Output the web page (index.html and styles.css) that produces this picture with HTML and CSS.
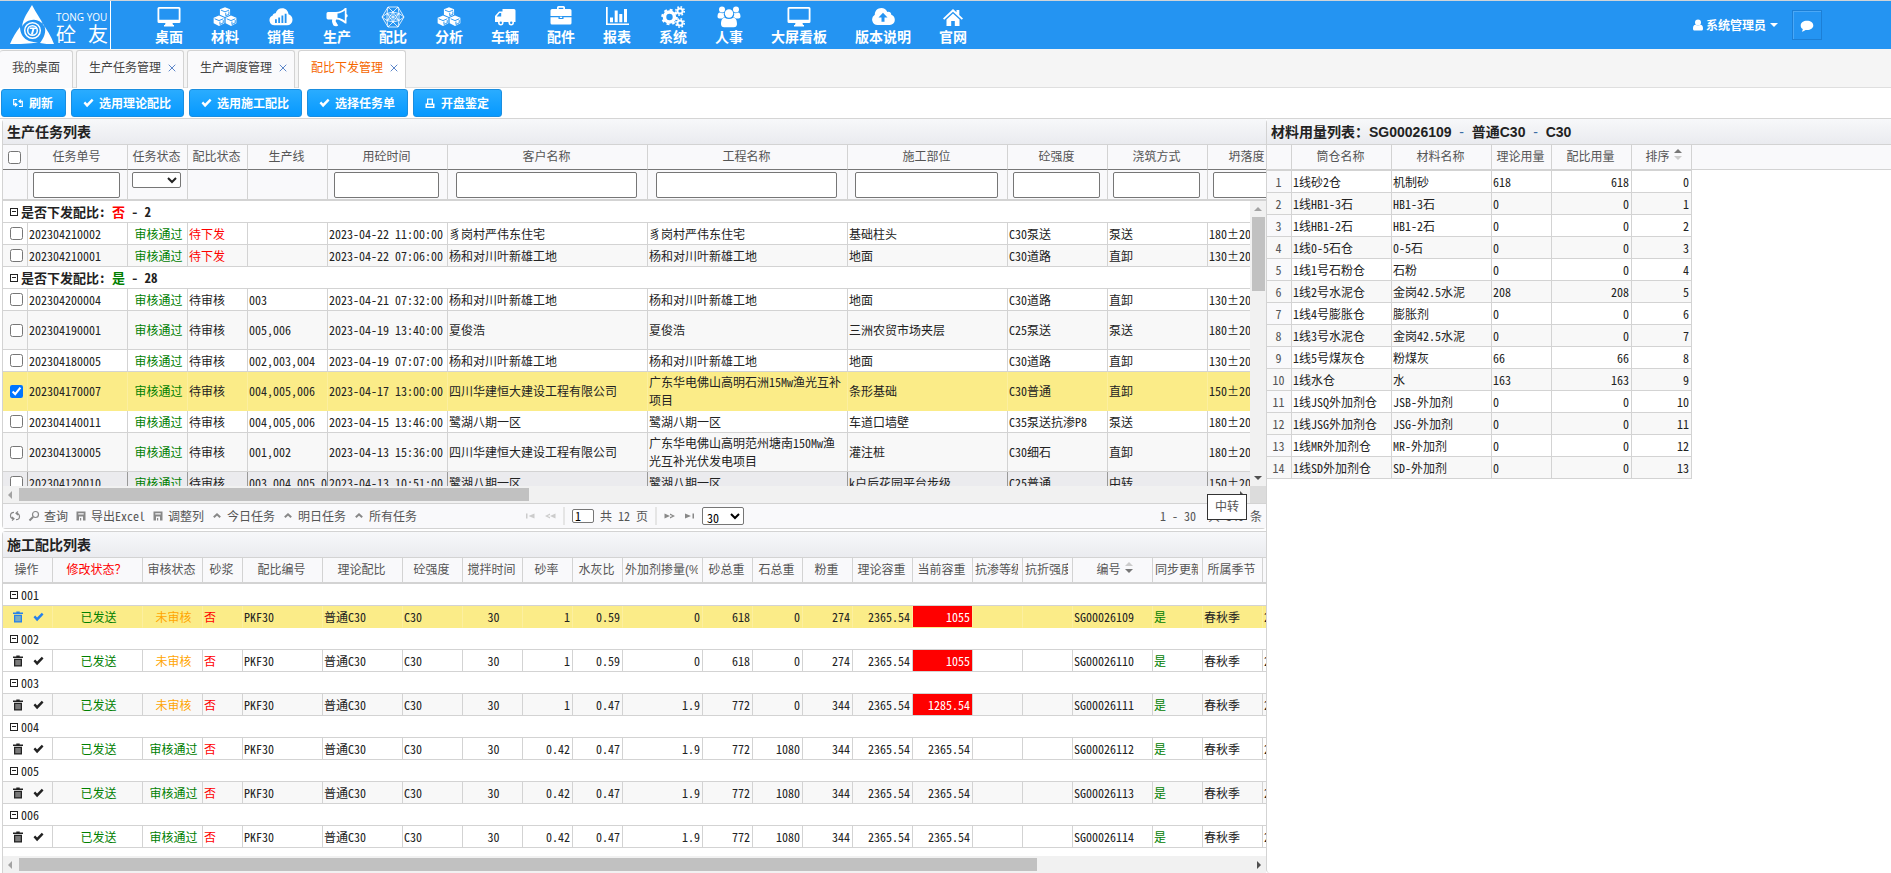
FILE: index.html
```html
<!DOCTYPE html>
<html lang="zh-CN">
<head>
<meta charset="utf-8">
<title>配比下发管理</title>
<link rel="stylesheet" href="styles.css">
</head>
<body>
<svg class="defs" aria-hidden="true">
  <symbol id="i-desktop" viewBox="0 0 24 22"><path fill-rule="evenodd" d="M2 1h20a1.500 1.500 0 0 1 1.500 1.500v13a1.500 1.500 0 0 1-1.500 1.500h-6.500l.5 2h1v1.500h-10v-1.500h1l.5-2H2A1.500 1.500 0 0 1 .5 15.500v-13A1.500 1.500 0 0 1 2 1zm.3 1.800v11h19.400v-11z"/></symbol>
  <symbol id="i-cubes" viewBox="0 0 26 22"><path d="M13 .5l5.500 2.200v5.800L13 11 7.500 8.500V2.700zM6.500 9.500l5.800 2.400v6L6.500 20.700.7 17.900v-6zM19.500 9.500l5.800 2.400v6l-5.800 2.800-5.800-2.800v-6z"/><path class="cut" d="M8.500 3.500L13 5.400l4.500-1.900M13.800 6.500v3.100l3.400-1.500v-3M1.800 12.900l4.700 2 4.700-2M14.800 12.900l4.700 2 4.700-2M7.500 16v3.100l3.600-1.700v-3M20.500 16v3.100l3.600-1.700v-3"/></symbol>
  <symbol id="i-cloudbars" viewBox="0 0 26 22"><path d="M6 20a5.500 5.500 0 0 1-2-10.600C4 8 5.500 6.600 7.200 6.900 8 3.500 11 1.500 14.200 1.500c4 0 6.800 2.900 6.900 6.500 2.500.8 4.400 3 4.400 6a6 6 0 0 1-6 6z"/><path class="cut thick" d="M7.500 17.500v-4M11 17.500v-6M14.500 17.500v-8M18 17.500v-10"/></symbol>
  <symbol id="i-horn" viewBox="0 0 24 22"><path fill-rule="evenodd" d="M3 6h8c3.500 0 6.500-1.500 9-4h1.500v6a1.800 1.800 0 0 1 0 3.400v6H20c-2.500-2.400-5.500-3.900-8.700-4-1 1.200-.6 2.200.3 3.400.6.900.6 1.600 1.600 2.400-.8 1.200-3.500 1.200-4.700.3C7.800 17.500 6.500 16 7.200 13.400H3A1.500 1.500 0 0 1 1.500 12V7.500A1.500 1.500 0 0 1 3 6zm9.500 1.600v4.200c2.600.3 5 1.300 7.300 2.900V4.500c-2.300 1.800-4.700 2.800-7.300 3.100z"/></symbol>
  <symbol id="i-poly" viewBox="0 0 24 22"><path class="line" d="M7 1h10l6 10-6 10H7L1 11zM7 1l5 5 5-5M1 11l5-3.500L7 1M23 11l-5-3.500L17 1M1 11l5 3.500L7 21M23 11l-5 3.500-1 6.500M7 21l5-5 5 5M6 7.500L12 6l6 1.500v7L12 16l-6-1.500zM6 7.500l12 7M18 7.500l-12 7M12 6v10M6 7.500L12 16l6-8.500M6 14.500L12 6l6 8.500"/></symbol>
  <symbol id="i-truck" viewBox="0 0 24 22"><path fill-rule="evenodd" d="M9.500 3H21a1.500 1.500 0 0 1 1.500 1.500V16H21a3 3 0 0 1-5.600 0h-4.800A3 3 0 0 1 5 16H2v-6l4-4.500h3.500zM3.700 10.500h4.500V7H6.600z"/><circle cx="7.800" cy="16.800" r="2.700"/><circle cx="18.200" cy="16.800" r="2.700"/><circle class="blue" cx="7.800" cy="16.800" r="1.200"/><circle class="blue" cx="18.200" cy="16.800" r="1.200"/></symbol>
  <symbol id="i-case" viewBox="0 0 24 22"><path fill-rule="evenodd" d="M8 3V1.500A1.500 1.500 0 0 1 9.500 0h5A1.500 1.500 0 0 1 16 1.500V3h5a1.500 1.500 0 0 1 1.500 1.500V10h-21V4.500A1.500 1.500 0 0 1 3 3zm1.700-1.300V3h4.600V1.700zM1.500 11.200h8V13h5v-1.800h8V17a1.500 1.500 0 0 1-1.500 1.500H3A1.500 1.500 0 0 1 1.500 17zM10.800 10.800h2.400v1.200h-2.400z"/></symbol>
  <symbol id="i-bars" viewBox="0 0 24 22"><path d="M1 1h1.700v16.500H24V19H1zM5 11.500h3v4.700H5zM9.700 4.500h3v11.700h-3zM14.300 8h3v8.200h-3zM19 3h3v13.200h-3z"/></symbol>
  <symbol id="i-cogs" viewBox="0 0 24 22"><circle class="gear" cx="8.500" cy="11" r="5"/><circle class="teeth" cx="8.500" cy="11" r="7.300"/><circle class="gear2" cx="19" cy="5" r="2.600"/><circle class="teeth2" cx="19" cy="5" r="4.200"/><circle class="gear2" cx="19" cy="17" r="2.600"/><circle class="teeth2" cx="19" cy="17" r="4.200"/></symbol>
  <symbol id="i-users" viewBox="0 0 24 22"><circle cx="5" cy="3.500" r="3"/><circle cx="19" cy="3.500" r="3"/><path d="M.5 10.500c0-2.500 1-4 2.500-4 1.500.8 3 .8 4 .2-.6 1.800 0 3.500 1 4.600-1 0-2 .4-2.800 1.200H2.500c-1.300 0-2-.7-2-2zM23.500 10.500c0-2.500-1-4-2.500-4-1.500.8-3 .8-4 .2.600 1.800 0 3.500-1 4.600 1 0 2 .4 2.800 1.200h2.700c1.300 0 2-.7 2-2z"/><circle cx="12" cy="7.500" r="4.200"/><path d="M4 18c0-4 1.300-6.300 3.800-6.300 2.500 1.600 5.900 1.600 8.400 0 2.500 0 3.800 2.300 3.800 6.300 0 2-1.200 3.300-3.200 3.300H7.200C5.200 21.300 4 20 4 18z"/></symbol>
  <symbol id="i-cloudup" viewBox="0 0 24 22"><path fill-rule="evenodd" d="M6.500 19A5.500 5.500 0 0 1 3.800 8.800C3.600 5 6.600 2 10.300 2c2.700 0 5 1.500 6 4 1.900-.8 4 .5 4 2.700 2 .6 3.500 2.500 3.500 5A5 5 0 0 1 18.500 19zM12 6.800l-4.500 4.600h3v4.400h3v-4.400h3z"/></symbol>
  <symbol id="i-home" viewBox="0 0 24 22"><path d="M12 3l3.500 3.300V4h2.800v5L22 12.500l-1.200 1.300L12 5.700l-8.800 8.100L2 12.500z"/><path d="M12 7.500l6.500 6V20h-4.700v-5h-3.600v5H5.500v-6.500z"/></symbol>
  <symbol id="i-check" viewBox="0 0 12 12"><path d="M1.500 6.200l1.700-1.700 1.900 1.900L9.800 1.700l1.700 1.700-6.400 6.900z"/></symbol>
  <symbol id="i-refresh" viewBox="0 0 12 12"><path class="line2" d="M5 2.500H1.700v5.200h3M3 6l2 1.700-2 1.700M7 9.500h3.300V4.300h-3M9 2.600L7 4.300 9 6"/></symbol>
  <symbol id="i-sync" viewBox="0 0 12 12"><path class="line2" d="M5 2.300C2.500 2.300 1.500 4 1.500 5.500S2.500 8.700 4.500 8.700M3 6.900l2 1.800-2 1.800M7 9.700c2.500 0 3.500-1.700 3.500-3.200S9.500 3.300 7.500 3.300M9 1.500L7 3.300l2 1.800"/></symbol>
  <symbol id="i-print" viewBox="0 0 12 12"><path fill-rule="evenodd" d="M3 1.500h6v5h1.500v4.500H1.500V6.500H3zm1.300 1.300v3.700h3.400V2.800zM3 8v1.500h6V8z"/></symbol>
  <symbol id="i-trash" viewBox="0 0 12 12"><path fill-rule="evenodd" d="M4.300.5h3.400v1H11v1.500H1V1.500h3.300zM2 3.800h8v7.700H2zM3.700 5v5.300h.7V5zm1.900 0v5.300h.8V5zm2 0v5.300h.7V5z"/></symbol>
  <symbol id="i-search" viewBox="0 0 12 12"><circle class="line2" cx="7.500" cy="4.500" r="3"/><path class="line3" d="M5 7L1.500 10.500"/></symbol>
  <symbol id="i-disk" viewBox="0 0 12 12"><path fill-rule="evenodd" d="M1.500 1.500h9v9h-9zM3.300 3.200v1.300h5.400V3.200zM4 6.500v4h1V8h1.200v2.500H8v-4z"/></symbol>
  <symbol id="i-up" viewBox="0 0 12 12"><path class="line3" d="M2.800 7.300L6 4.300l3.200 3"/></symbol>
</svg>

<div class="app">
<header class="topbar">
  <a class="logo" href="#" aria-label="砼友">
    <svg class="logo-mark" viewBox="0 0 44 40">
      <path class="w" d="M22 0c4 8 9 14 12 21-3-5-8-7-12-6-5 0-9 4-10 7 1-9 6-15 10-22zM0 39c3-7 6-12 10-17 0 7 4 12 9 14 3 1 6 1 9 1-8 2-19 2-28 2zM44 39c-5 0-10 0-14-1 3-4 6-9 5-15-1-3-2-5-4-6 6 7 10 14 13 22z"/>
      <circle class="ring" cx="22.500" cy="25.500" r="7.800"/>
      <circle class="ring" cx="22.500" cy="25.500" r="4.800"/>
      <path class="w" d="M20 22.500h7l-.4 1.600h-2.200l-1.500 5.400h-2l1.500-5.400h-2.800z"/>
    </svg>
    <span class="logo-text"><span class="logo-en">TONG YOU</span><span class="logo-cn"><span>砼</span><span>友</span></span></span>
  </a>
  <nav class="nav">
    <a href="#"><svg><use href="#i-desktop"/></svg>桌面</a>
    <a href="#"><svg><use href="#i-cubes"/></svg>材料</a>
    <a href="#"><svg><use href="#i-cloudbars"/></svg>销售</a>
    <a href="#"><svg><use href="#i-horn"/></svg>生产</a>
    <a href="#"><svg><use href="#i-poly"/></svg>配比</a>
    <a href="#"><svg><use href="#i-cubes"/></svg>分析</a>
    <a href="#"><svg><use href="#i-truck"/></svg>车辆</a>
    <a href="#"><svg><use href="#i-case"/></svg>配件</a>
    <a href="#"><svg><use href="#i-bars"/></svg>报表</a>
    <a href="#"><svg><use href="#i-cogs"/></svg>系统</a>
    <a href="#"><svg><use href="#i-users"/></svg>人事</a>
    <a href="#"><svg><use href="#i-desktop"/></svg>大屏看板</a>
    <a href="#"><svg><use href="#i-cloudup"/></svg>版本说明</a>
    <a href="#"><svg><use href="#i-home"/></svg>官网</a>
  </nav>
  <div class="account">
    <button class="user" type="button">
      <svg viewBox="0 0 12 12"><circle cx="6" cy="3.500" r="3"/><path d="M1 9.500C1 7 2 5.800 3.500 5.800c1.500 1 3.500 1 5 0C10 5.800 11 7 11 9.500c0 1.500-.5 2-1.500 2h-7c-1 0-1.500-.5-1.500-2z"/></svg>
      系统管理员<span class="caret"></span>
    </button>
    <button class="chat" type="button" aria-label="消息"><svg viewBox="0 0 14 12"><path d="M7 .8c3.600 0 6.300 2 6.300 4.600S10.600 10 7 10c-.5 0-1 0-1.400-.1-1 .9-2.300 1.500-3.800 1.600.6-.7 1-1.500 1-2.400C1.500 8.300.7 7 .7 5.400.7 2.800 3.400.8 7 .8z"/></svg></button>
  </div>
</header>

<div class="tabs">
  <div class="tab"><a href="#">我的桌面</a></div>
  <div class="tab"><a href="#">生产任务管理</a><button type="button" aria-label="关闭"><svg viewBox="0 0 8 8"><path d="M.7.700l6.600 6.600M7.300.700L.7 7.300"/></svg></button></div>
  <div class="tab"><a href="#">生产调度管理</a><button type="button" aria-label="关闭"><svg viewBox="0 0 8 8"><path d="M.7.700l6.600 6.600M7.300.700L.7 7.300"/></svg></button></div>
  <div class="tab active"><a href="#">配比下发管理</a><button type="button" aria-label="关闭"><svg viewBox="0 0 8 8"><path d="M.7.700l6.600 6.600M7.300.700L.7 7.300"/></svg></button></div>
</div>

<div class="toolbar">
  <button type="button"><svg><use href="#i-refresh"/></svg>刷新</button>
  <button type="button"><svg><use href="#i-check"/></svg>选用理论配比</button>
  <button type="button"><svg><use href="#i-check"/></svg>选用施工配比</button>
  <button type="button"><svg><use href="#i-check"/></svg>选择任务单</button>
  <button type="button"><svg><use href="#i-print"/></svg>开盘鉴定</button>
</div>

<main class="work">
<div class="left">
  <section class="panel tasks">
    <h2>生产任务列表</h2>
    <div class="clip">
    <table class="grid head task-cols">
      <colgroup><col class="c25"><col class="c100"><col class="c60"><col class="c60"><col class="c80"><col class="c120"><col class="c200"><col class="c200"><col class="c160"><col class="c100"><col class="c100"><col class="c80"></colgroup>
      <tr><th><input type="checkbox" aria-label="全选"></th><th>任务单号</th><th>任务状态</th><th>配比状态</th><th>生产线</th><th>用砼时间</th><th>客户名称</th><th>工程名称</th><th>施工部位</th><th>砼强度</th><th>浇筑方式</th><th>坍落度</th></tr>
      <tr class="filter"><td></td><td><input type="text" aria-label="任务单号"></td><td><select aria-label="任务状态"><option></option></select></td><td></td><td></td><td><input type="text" aria-label="用砼时间"></td><td><input type="text" aria-label="客户名称"></td><td><input type="text" aria-label="工程名称"></td><td><input type="text" aria-label="施工部位"></td><td><input type="text" aria-label="砼强度"></td><td><input type="text" aria-label="浇筑方式"></td><td><input type="text" aria-label="坍落度"></td></tr>
    </table>
    </div>
    <div class="task-body">
      <div class="clip">
      <table class="grid body task-cols">
        <colgroup><col class="c25"><col class="c100"><col class="c60"><col class="c60"><col class="c80"><col class="c120"><col class="c200"><col class="c200"><col class="c160"><col class="c100"><col class="c100"><col class="c80"></colgroup>
        <tr class="group big"><td colspan="12"><i class="fold"></i>是否下发配比: <span class="red">否</span> - 2</td></tr>
        <tr><td class="c"><input type="checkbox" aria-label="选择"></td><td>202304210002</td><td class="c green">审核通过</td><td class="red">待下发</td><td></td><td>2023-04-22 11:00:00</td><td>豸岗村严伟东住宅</td><td>豸岗村严伟东住宅</td><td>基础柱头</td><td>C30泵送</td><td>泵送</td><td>180±20</td></tr>
        <tr class="alt"><td class="c"><input type="checkbox" aria-label="选择"></td><td>202304210001</td><td class="c green">审核通过</td><td class="red">待下发</td><td></td><td>2023-04-22 07:06:00</td><td>杨和对川叶新雄工地</td><td>杨和对川叶新雄工地</td><td>地面</td><td>C30道路</td><td>直卸</td><td>130±20</td></tr>
        <tr class="group big"><td colspan="12"><i class="fold"></i>是否下发配比: <span class="green">是</span> - 28</td></tr>
        <tr><td class="c"><input type="checkbox" aria-label="选择"></td><td>202304200004</td><td class="c green">审核通过</td><td>待审核</td><td>003</td><td>2023-04-21 07:32:00</td><td>杨和对川叶新雄工地</td><td>杨和对川叶新雄工地</td><td>地面</td><td>C30道路</td><td>直卸</td><td>130±20</td></tr>
        <tr class="alt tall"><td class="c"><input type="checkbox" aria-label="选择"></td><td>202304190001</td><td class="c green">审核通过</td><td>待审核</td><td>005,006</td><td>2023-04-19 13:40:00</td><td>夏俊浩</td><td>夏俊浩</td><td>三洲农贸市场夹层</td><td>C25泵送</td><td>泵送</td><td>180±20</td></tr>
        <tr><td class="c"><input type="checkbox" aria-label="选择"></td><td>202304180005</td><td class="c green">审核通过</td><td>待审核</td><td>002,003,004</td><td>2023-04-19 07:07:00</td><td>杨和对川叶新雄工地</td><td>杨和对川叶新雄工地</td><td>地面</td><td>C30道路</td><td>直卸</td><td>130±20</td></tr>
        <tr class="tall sel"><td class="c"><input type="checkbox" checked aria-label="选择"></td><td>202304170007</td><td class="c green">审核通过</td><td>待审核</td><td>004,005,006</td><td>2023-04-17 13:00:00</td><td>四川华建恒大建设工程有限公司</td><td class="wrap">广东华电佛山高明石洲15Mw渔光互补项目</td><td>条形基础</td><td>C30普通</td><td>直卸</td><td>150±20</td></tr>
        <tr><td class="c"><input type="checkbox" aria-label="选择"></td><td>202304140011</td><td class="c green">审核通过</td><td>待审核</td><td>004,005,006</td><td>2023-04-15 13:46:00</td><td>鹭湖八期一区</td><td>鹭湖八期一区</td><td>车道口墙壁</td><td>C35泵送抗渗P8</td><td>泵送</td><td>180±20</td></tr>
        <tr class="alt tall"><td class="c"><input type="checkbox" aria-label="选择"></td><td>202304130005</td><td class="c green">审核通过</td><td>待审核</td><td>001,002</td><td>2023-04-13 15:36:00</td><td>四川华建恒大建设工程有限公司</td><td class="wrap">广东华电佛山高明范州塘南150Mw渔光互补光伏发电项目</td><td>灌注桩</td><td>C30细石</td><td>直卸</td><td>180±20</td></tr>
        <tr class="over"><td class="c"><input type="checkbox" aria-label="选择"></td><td>202304120010</td><td class="c green">审核通过</td><td>待审核</td><td>003,004,005,006</td><td>2023-04-13 10:51:00</td><td>鹭湖八期一区</td><td>鹭湖八期一区</td><td>k户后花园平台步级</td><td>C25普通</td><td>中转</td><td>150±20</td></tr>
      </table>
      </div>
      <div class="vbar"><i class="arrow up"></i><div class="thumb"></div><i class="arrow down"></i></div>
    </div>
    <div class="hbar first"><i class="arrow lt"></i><div class="track"><div class="thumb" style="width:42%"></div></div><i class="arrow rt"></i><div class="corner"></div></div>
    <div class="pager">
      <div class="tools">
        <button type="button" aria-label="刷新"><svg><use href="#i-sync"/></svg></button>
        <button type="button"><svg><use href="#i-search"/></svg>查询</button>
        <button type="button"><svg><use href="#i-disk"/></svg>导出Excel</button>
        <button type="button"><svg><use href="#i-disk"/></svg>调整列</button>
        <button type="button"><svg><use href="#i-up"/></svg>今日任务</button>
        <button type="button"><svg><use href="#i-up"/></svg>明日任务</button>
        <button type="button"><svg><use href="#i-up"/></svg>所有任务</button>
      </div>
      <div class="pages">
        <button class="off" type="button" aria-label="首页"><svg viewBox="0 0 12 8"><path d="M1 1.500h1.500v5H1zM9.500 1.500v5L3.500 4z"/></svg></button>
        <button class="off" type="button" aria-label="上一页"><svg viewBox="0 0 12 8"><path d="M6 1.500v1.500L3.500 4 6 5v1.500L1 4zM11.500 1.500v5L6 4z"/></svg></button>
        <i class="bar"></i>
        <label><input type="text" value="1" aria-label="页码"><span>共 12 页</span></label>
        <i class="bar"></i>
        <button type="button" aria-label="下一页"><svg viewBox="0 0 12 8"><path d="M.5 1.500L6 4 .5 6.500zM6 1.500L11 4 6 6.500V5l2.500-1L6 3z"/></svg></button>
        <button type="button" aria-label="末页"><svg viewBox="0 0 12 8"><path d="M2 1.500L8 4 2 6.500zM9.500 1.500H11v5H9.500z"/></svg></button>
        <select aria-label="每页条数"><option>30</option></select>
      </div>
      <div class="info">1 - 30&nbsp; 共 340 条</div>
    </div>
    <div class="tip" role="tooltip">中转</div>
  </section>

  <section class="panel mixes">
    <h2>施工配比列表</h2>
    <div class="clip">
    <table class="grid body mix-cols">
      <colgroup><col class="c50"><col class="c90"><col class="c60"><col class="c40"><col class="c80"><col class="c80"><col class="c60"><col class="c60"><col class="c50"><col class="c50"><col class="c80"><col class="c50"><col class="c50"><col class="c50"><col class="c60"><col class="c60"><col class="c50"><col class="c50"><col class="c80"><col class="c50"><col class="c60"><col class="c80"></colgroup>
      <tr class="labels"><th>操作</th><th class="red">修改状态？</th><th>审核状态</th><th>砂浆</th><th>配比编号</th><th>理论配比</th><th>砼强度</th><th>搅拌时间</th><th>砂率</th><th>水灰比</th><th><div>外加剂掺量(%)</div></th><th>砂总重</th><th>石总重</th><th>粉重</th><th>理论容重</th><th>当前容重</th><th><div>抗渗等级</div></th><th><div>抗折强度</div></th><th class="sorted">编号<span class="sort desc"></span></th><th><div>同步更新</div></th><th>所属季节</th><th></th></tr>
      <tr class="group"><td colspan="22"><i class="fold"></i>001</td></tr>
      <tr class="sel"><td class="ops"><button type="button" aria-label="删除"><svg><use href="#i-trash"/></svg></button><button type="button" aria-label="审核"><svg><use href="#i-check"/></svg></button></td><td class="c green">已发送</td><td class="c orange">未审核</td><td class="red">否</td><td>PKF30</td><td>普通C30</td><td>C30</td><td class="c">30</td><td class="r">1</td><td class="r">0.59</td><td class="r">0</td><td class="r">618</td><td class="r">0</td><td class="r">274</td><td class="r">2365.54</td><td class="r warn">1055</td><td></td><td></td><td>SG00026109</td><td class="green">是</td><td>春秋季</td><td>2023</td></tr>
      <tr class="group"><td colspan="22"><i class="fold"></i>002</td></tr>
      <tr><td class="ops"><button type="button" aria-label="删除"><svg><use href="#i-trash"/></svg></button><button type="button" aria-label="审核"><svg><use href="#i-check"/></svg></button></td><td class="c green">已发送</td><td class="c orange">未审核</td><td class="red">否</td><td>PKF30</td><td>普通C30</td><td>C30</td><td class="c">30</td><td class="r">1</td><td class="r">0.59</td><td class="r">0</td><td class="r">618</td><td class="r">0</td><td class="r">274</td><td class="r">2365.54</td><td class="r warn">1055</td><td></td><td></td><td>SG00026110</td><td class="green">是</td><td>春秋季</td><td>2023</td></tr>
      <tr class="group"><td colspan="22"><i class="fold"></i>003</td></tr>
      <tr class="alt"><td class="ops"><button type="button" aria-label="删除"><svg><use href="#i-trash"/></svg></button><button type="button" aria-label="审核"><svg><use href="#i-check"/></svg></button></td><td class="c green">已发送</td><td class="c orange">未审核</td><td class="red">否</td><td>PKF30</td><td>普通C30</td><td>C30</td><td class="c">30</td><td class="r">1</td><td class="r">0.47</td><td class="r">1.9</td><td class="r">772</td><td class="r">0</td><td class="r">344</td><td class="r">2365.54</td><td class="r warn">1285.54</td><td></td><td></td><td>SG00026111</td><td class="green">是</td><td>春秋季</td><td>2023</td></tr>
      <tr class="group"><td colspan="22"><i class="fold"></i>004</td></tr>
      <tr><td class="ops"><button type="button" aria-label="删除"><svg><use href="#i-trash"/></svg></button><button type="button" aria-label="审核"><svg><use href="#i-check"/></svg></button></td><td class="c green">已发送</td><td class="c green">审核通过</td><td class="red">否</td><td>PKF30</td><td>普通C30</td><td>C30</td><td class="c">30</td><td class="r">0.42</td><td class="r">0.47</td><td class="r">1.9</td><td class="r">772</td><td class="r">1080</td><td class="r">344</td><td class="r">2365.54</td><td class="r">2365.54</td><td></td><td></td><td>SG00026112</td><td class="green">是</td><td>春秋季</td><td>2023</td></tr>
      <tr class="group"><td colspan="22"><i class="fold"></i>005</td></tr>
      <tr class="alt"><td class="ops"><button type="button" aria-label="删除"><svg><use href="#i-trash"/></svg></button><button type="button" aria-label="审核"><svg><use href="#i-check"/></svg></button></td><td class="c green">已发送</td><td class="c green">审核通过</td><td class="red">否</td><td>PKF30</td><td>普通C30</td><td>C30</td><td class="c">30</td><td class="r">0.42</td><td class="r">0.47</td><td class="r">1.9</td><td class="r">772</td><td class="r">1080</td><td class="r">344</td><td class="r">2365.54</td><td class="r">2365.54</td><td></td><td></td><td>SG00026113</td><td class="green">是</td><td>春秋季</td><td>2023</td></tr>
      <tr class="group"><td colspan="22"><i class="fold"></i>006</td></tr>
      <tr><td class="ops"><button type="button" aria-label="删除"><svg><use href="#i-trash"/></svg></button><button type="button" aria-label="审核"><svg><use href="#i-check"/></svg></button></td><td class="c green">已发送</td><td class="c green">审核通过</td><td class="red">否</td><td>PKF30</td><td>普通C30</td><td>C30</td><td class="c">30</td><td class="r">0.42</td><td class="r">0.47</td><td class="r">1.9</td><td class="r">772</td><td class="r">1080</td><td class="r">344</td><td class="r">2365.54</td><td class="r">2365.54</td><td></td><td></td><td>SG00026114</td><td class="green">是</td><td>春秋季</td><td>2023</td></tr>
    </table>
    </div>
    <div class="hbar"><i class="arrow lt"></i><div class="track"><div class="thumb" style="width:82.7%"></div></div><i class="arrow rt"></i></div>
  </section>
</div>

<section class="panel usage">
  <h2>材料用量列表：SG00026109 <b>&nbsp;-&nbsp;</b> 普通C30 <b>&nbsp;-&nbsp;</b> C30</h2>
  <div class="usage-head">
  <table class="grid body use-cols">
    <colgroup><col class="c25"><col class="c100"><col class="c100"><col class="c60"><col class="c80"><col class="c60"></colgroup>
    <tr class="labels"><th></th><th>筒仓名称</th><th>材料名称</th><th>理论用量</th><th>配比用量</th><th class="sorted">排序<span class="sort asc"></span></th></tr>
    <tr><td class="n">1</td><td>1线砂2仓</td><td>机制砂</td><td>618</td><td class="r">618</td><td class="r">0</td></tr>
    <tr class="alt"><td class="n">2</td><td>1线HB1-3石</td><td>HB1-3石</td><td>0</td><td class="r">0</td><td class="r">1</td></tr>
    <tr><td class="n">3</td><td>1线HB1-2石</td><td>HB1-2石</td><td>0</td><td class="r">0</td><td class="r">2</td></tr>
    <tr class="alt"><td class="n">4</td><td>1线0-5石仓</td><td>0-5石</td><td>0</td><td class="r">0</td><td class="r">3</td></tr>
    <tr><td class="n">5</td><td>1线1号石粉仓</td><td>石粉</td><td>0</td><td class="r">0</td><td class="r">4</td></tr>
    <tr class="alt"><td class="n">6</td><td>1线2号水泥仓</td><td>金岗42.5水泥</td><td>208</td><td class="r">208</td><td class="r">5</td></tr>
    <tr><td class="n">7</td><td>1线4号膨胀仓</td><td>膨胀剂</td><td>0</td><td class="r">0</td><td class="r">6</td></tr>
    <tr class="alt"><td class="n">8</td><td>1线3号水泥仓</td><td>金岗42.5水泥</td><td>0</td><td class="r">0</td><td class="r">7</td></tr>
    <tr><td class="n">9</td><td>1线5号煤灰仓</td><td>粉煤灰</td><td>66</td><td class="r">66</td><td class="r">8</td></tr>
    <tr class="alt"><td class="n">10</td><td>1线水仓</td><td>水</td><td>163</td><td class="r">163</td><td class="r">9</td></tr>
    <tr><td class="n">11</td><td>1线JSQ外加剂仓</td><td>JSB-外加剂</td><td>0</td><td class="r">0</td><td class="r">10</td></tr>
    <tr class="alt"><td class="n">12</td><td>1线JSG外加剂仓</td><td>JSG-外加剂</td><td>0</td><td class="r">0</td><td class="r">11</td></tr>
    <tr><td class="n">13</td><td>1线MR外加剂仓</td><td>MR-外加剂</td><td>0</td><td class="r">0</td><td class="r">12</td></tr>
    <tr class="alt"><td class="n">14</td><td>1线SD外加剂仓</td><td>SD-外加剂</td><td>0</td><td class="r">0</td><td class="r">13</td></tr>
  </table>
  </div>
</section>
</main>
</div>
</body>
</html>
```

FILE: styles.css
```css
* { box-sizing: border-box; }

body {
  margin: 0;
  font: 12px/18px "Liberation Sans", "Noto Sans CJK SC", sans-serif;
  color: #222;
  background: #fff;
}

button, input, select { font: inherit; color: inherit; }
button { padding: 0; border: 0; background: none; }
a { color: inherit; text-decoration: none; }
svg { fill: currentColor; flex: none; }
.defs { position: absolute; width: 0; height: 0; }

.red { color: #f00; }
.green { color: #008000; }
.orange { color: #ffa500; }

.app {
  display: flex;
  flex-direction: column;
  height: 100vh;
  overflow: hidden;
}

/* Top bar */
.topbar {
  display: flex;
  flex: none;
  height: 49px;
  border-top: 1px solid #d0d4d8;
  background: #2494f2;
  color: #fff;
}
.logo {
  display: flex;
  width: 111px;
  margin-right: 30px;
  padding: 4px 0 0 10px;
  border-right: 1px solid #fff;
}
.logo-mark { width: 44px; height: 40px; }
.logo-mark .w { fill: #fff; }
.logo-mark .ring { fill: none; stroke: #fff; stroke-width: 1.5; }
.logo-text { width: 52px; margin: 5px 0 0 2px; }
.logo-en { display: block; font: 10px/14px "Open Sans", sans-serif; white-space: nowrap; }
.logo-cn { display: flex; justify-content: space-between; font: 20px/20px "Noto Sans CJK SC", sans-serif; }

.nav { display: flex; }
.nav a {
  display: flex;
  flex-direction: column;
  align-items: center;
  padding: 5px 14px 0;
  font: bold 14px/16px "Noto Sans CJK SC", sans-serif;
  white-space: nowrap;
}
.nav svg { width: 24px; height: 22px; }
.cut { fill: none; stroke: #2494f2; stroke-width: 1; }
.thick { stroke-width: 2; }
.blue { fill: #2494f2; }
.line { fill: none; stroke: #fff; stroke-width: 0.8; }
.line2 { fill: none; stroke: currentColor; stroke-width: 1.2; }
.line3 { fill: none; stroke: currentColor; stroke-width: 2; }
.gear { fill: none; stroke: #fff; stroke-width: 3.6; }
.teeth { fill: none; stroke: #fff; stroke-width: 2; stroke-dasharray: 2.9 2.83; }
.gear2 { fill: none; stroke: #fff; stroke-width: 2; }
.teeth2 { fill: none; stroke: #fff; stroke-width: 1.6; stroke-dasharray: 1.65 1.65; }

.account { display: flex; align-items: flex-start; gap: 14px; margin: 9px 69px 0 auto; }
.user {
  display: flex;
  align-items: center;
  gap: 2px;
  height: 30px;
  font: bold 12px/18px "Noto Sans CJK SC", sans-serif;
}
.user svg { width: 12px; height: 12px; }
.caret { margin-left: 2px; border: 4px solid transparent; border-top-color: #fff; border-bottom: 0; }
.chat {
  width: 30px;
  height: 30px;
  border: 1px solid #1c7fd6;
  box-shadow: inset 1px 1px 0 #4ba8f6;
}
.chat svg { width: 14px; height: 12px; vertical-align: middle; }

/* Tabs */
.tabs {
  display: flex;
  flex: none;
  gap: 3px;
  height: 39px;
  padding-top: 1px;
  border-bottom: 1px solid #dfdfdf;
  background: #f5f5f5;
}
.tab {
  display: flex;
  align-items: center;
  gap: 7px;
  height: 38px;
  padding: 0 7px 4px 12px;
  border: 1px solid #d3d3d3;
  border-bottom: 0;
  border-radius: 3px 3px 0 0;
  background: #fafafc;
  color: #444;
}
.tab:first-child { padding-right: 12px; border-left: 0; }
.tab.active { background: #fff; color: #f56600; }
.tab button { width: 8px; height: 8px; display: flex; }
.tab button svg { width: 8px; height: 8px; stroke: #5d86c9; }

/* Action buttons */
.toolbar {
  display: flex;
  flex: none;
  gap: 5px;
  height: 31px;
  padding: 1px 0 0 1px;
  border-bottom: 1px solid #d5d5d5;
}
.toolbar button {
  display: flex;
  align-items: center;
  gap: 5px;
  height: 28px;
  padding: 0 12px 0 10px;
  border: 1px solid #1a8ee0;
  border-radius: 3px;
  background: linear-gradient(#2aacff, #0699ff);
  color: #fff;
  font: bold 12px/18px "Noto Sans CJK SC", sans-serif;
}
.toolbar svg { width: 12px; height: 12px; }

/* Panels */
.work {
  display: grid;
  grid-template-columns: 66.95% 1fr;
  flex: 1;
  min-height: 0;
}
.left { display: flex; flex-direction: column; min-width: 0; min-height: 0; }
.panel { position: relative; min-width: 0; border: 1px solid #d3d3d3; border-radius: 4px; }
.tasks { margin: 0 0 2px 2px; border-width: 0 0 1px 1px; }
.mixes { display: flex; flex-direction: column; flex: 1; min-height: 0; margin-left: 2px; border-width: 1px 0 0 1px; border-radius: 4px 0 0 0; }
.usage { border-width: 0 0 0 1px; }
.panel h2 {
  height: 26px;
  margin: 0;
  padding: 0 4px;
  border-bottom: 1px solid #d3d3d3;
  background: linear-gradient(#f7f8fa, #eaebef);
  font: bold 14px/27px "Liberation Sans", "Noto Sans CJK SC", sans-serif;
}
.panel h2 b { color: #3a6ea5; font-weight: normal; }
.clip { flex: 1; min-width: 0; overflow: hidden; }

/* Grids */
.grid { table-layout: fixed; border-collapse: separate; border-spacing: 0; }
.task-cols { width: 1285px; }
.mix-cols { width: 1340px; }
.use-cols { width: 425px; }
.c25 { width: 25px; }
.c40 { width: 40px; }
.c50 { width: 50px; }
.c60 { width: 60px; }
.c80 { width: 80px; }
.c90 { width: 90px; }
.c100 { width: 100px; }
.c120 { width: 120px; }
.c160 { width: 160px; }
.c200 { width: 200px; }

.grid th {
  height: 25px;
  padding: 0 4px 0 2px;
  border-right: 1px solid #d3d3d3;
  border-bottom: 1px solid #777;
  background: #f9f9fb;
  color: #555;
  font-weight: normal;
  white-space: nowrap;
}
.grid th.red { color: #f00; }
.grid th div { overflow: hidden; }
.grid .labels th { height: 26px; border-bottom: 2px solid #d3d3d3; }
.grid .labels th.sorted { padding: 0 0 0 4px; }
.filter td {
  height: 31px;
  padding: 2px 5px 0 3px;
  border-right: 1px solid #d3d3d3;
  border-bottom: 2px solid #d3d3d3;
  background: #f9f9fb;
  vertical-align: top;
}
.filter input { display: block; width: 95%; height: 26px; margin: 0 auto; border: 1px solid #767676; border-radius: 2px; background: #fff; }
.filter select { display: block; width: 98%; height: 16px; margin: 0 auto; border: 1px solid #767676; border-radius: 2px; background: #fff; }
.grid input[type="checkbox"] { display: block; width: 13px; height: 13px; margin: 0 auto; }

.body { font-family: "Noto Sans Mono CJK SC", "Noto Sans CJK SC", monospace; }
.body th { font-family: "Liberation Sans", "Noto Sans CJK SC", sans-serif; }
.body td {
  height: 22px;
  padding: 0 2px 0 1px;
  overflow: hidden;
  border-right: 1px solid #d3d3d3;
  border-bottom: 1px solid #d3d3d3;
  white-space: nowrap;
}
.body .alt td { background: #f8f8f8; }
.body .tall td { height: 39px; }
.body td.wrap { white-space: normal; word-break: break-all; }
.body .c { padding: 0 1px 0 3px; text-align: center; }
.body .r { text-align: right; }
.body .n { background: #f9f9fb; color: #555; text-align: center; }
.body .sel td { border-color: #fbec88 #fcefa0 #fbec88 #fcefa0; background: #fbec88; }
.body .over td { border-right-color: #999; background: #ebebee; }
.body td.warn, .body .sel td.warn { background: #f00; color: #fff; }
.body .group td { padding-left: 7px; border-right: 0; }
.big { font-size: 13px; font-weight: bold; }
.fold {
  display: inline-block;
  width: 8px;
  height: 8px;
  margin-right: 3px;
  border: 1px solid #222;
  background: linear-gradient(#222, #222) center / 4px 1px no-repeat;
  vertical-align: 1px;
}
.ops button { margin: 0 0 0 8px; vertical-align: middle; }
.ops svg { display: block; width: 12px; height: 12px; }
.ops { font-size: 0; }
.sel .ops { color: #2680eb; }
.sort { position: relative; display: inline-block; width: 8px; height: 11px; margin-left: 4px; vertical-align: 1px; }
.sort::before, .sort::after { content: ""; position: absolute; left: 0; border: 4px solid transparent; }
.sort::before { top: 0; border-top: 0; border-bottom-color: #ccc; }
.sort::after { bottom: 0; border-bottom: 0; border-top-color: #ccc; }
.asc::before { border-bottom-color: #777; }
.desc::after { border-top-color: #777; }

.usage-head { background: linear-gradient(#f9f9fb, #f9f9fb) top / 100% 24px no-repeat, linear-gradient(#d3d3d3, #d3d3d3) 0 24px / 100% 1px no-repeat; }

/* Scroll areas */
.task-body { display: flex; height: 285px; overflow: hidden; }
.arrow { flex: none; width: 0; height: 0; border: 4px solid transparent; }
.arrow.up { border-top: 0; border-bottom-color: #a3a3a3; }
.arrow.down { margin-top: auto; border-bottom: 0; border-top-color: #505050; }
.arrow.lt { border-left: 0; border-right-color: #a3a3a3; }
.arrow.rt { border-right: 0; border-left-color: #505050; }
.vbar {
  display: flex;
  flex: none;
  flex-direction: column;
  align-items: center;
  gap: 6px;
  width: 16px;
  padding: 6px 0;
  background: #f1f1f1;
}
.vbar .thumb { width: 13px; height: 74px; background: #c1c1c1; }
.hbar {
  display: flex;
  flex: none;
  align-items: center;
  gap: 7px;
  height: 17px;
  padding: 0 5px;
  background: #f1f1f1;
}
.hbar.first { padding-right: 0; }
.hbar .track { flex: 1; }
.hbar .thumb { height: 13px; background: #c1c1c1; }
.corner { width: 16px; height: 17px; margin-left: -1px; background: #dcdcdc; }

/* Pager */
.pager {
  display: grid;
  grid-template-columns: 1fr auto 1fr;
  align-items: center;
  height: 25px;
  border-top: 1px solid #d3d3d3;
  background: #f9f9fb;
  color: #555;
  font-family: "Noto Sans Mono CJK SC", "Noto Sans CJK SC", monospace;
}
.pager button { display: flex; align-items: center; gap: 4px; white-space: nowrap; }
.pager svg { width: 12px; height: 12px; color: #888; }
.tools { display: flex; gap: 7px; padding-left: 6px; }
.pages { display: flex; align-items: center; gap: 7px; }
.pages .off svg { color: #ccc; }
.pages svg { height: 8px; }
.pages .bar { width: 2px; height: 18px; background: #e5e5e5; }
.pages label { display: flex; align-items: center; gap: 6px; white-space: nowrap; }
.pages input { width: 22px; height: 14px; padding: 0 2px; border: 1px solid #767676; border-radius: 2px; color: #000; }
.pages select { width: 42px; height: 18px; border: 1px solid #767676; border-radius: 2px; background: #fff; color: #000; line-height: 16px; }
.info { padding-right: 4px; text-align: right; }
.tip {
  position: absolute;
  right: 19px;
  bottom: 8px;
  padding: 3px 7px;
  border: 1px solid #333;
  background: #fff;
  color: #555;
}
```
